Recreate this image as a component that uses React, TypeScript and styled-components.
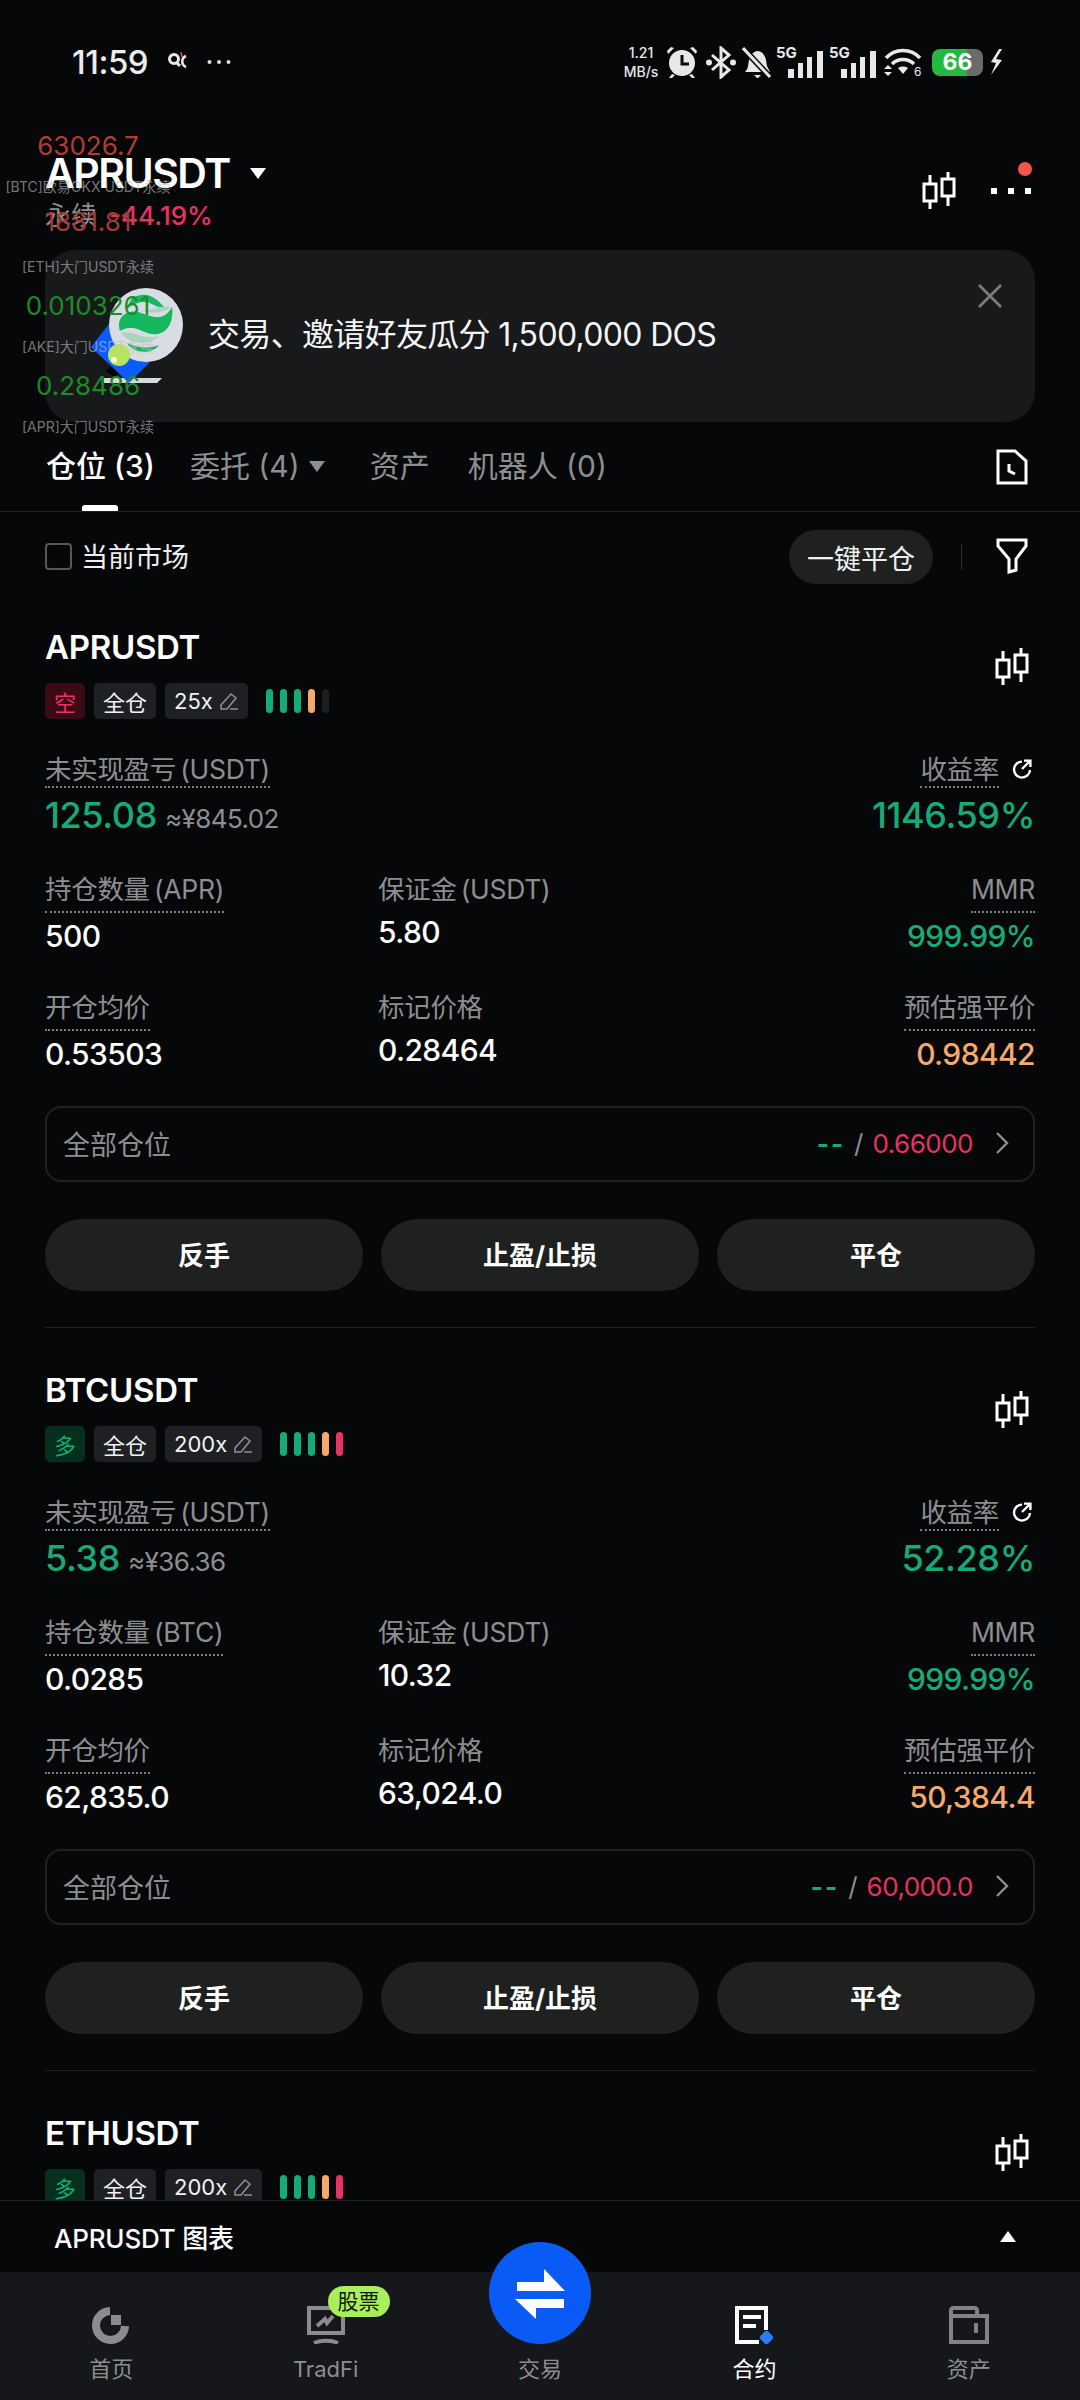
import styled, { createGlobalStyle } from "styled-components";

const GREEN = "#16ab76";
const RED = "#e8325f";
const ORANGE = "#f5a96b";
const GREY = "#8d8e90";
const LINE = "#1f2123";

const GlobalStyle = createGlobalStyle`
  html, body {
    margin: 0;
    padding: 0;
    width: 1080px;
    height: 2400px;
    overflow: hidden;
    background: #060708;
    color: #fff;
    font-family: Inter, "Noto Sans CJK SC", sans-serif;
  }
`;

const Page = styled.div`
  position: relative;
  width: 1080px;
  height: 2400px;
  display: flex;
  flex-direction: column;
  overflow: hidden;
  background: #060708;
`;

const Scroll = styled.div`
  flex: 1;
  min-height: 0;
  overflow: hidden;
`;

/* status bar */
const StatusBar = styled.div`
  height: 124px;
  display: flex;
  align-items: center;
  justify-content: space-between;
  padding: 0 77px 0 72px;
  box-sizing: border-box;
`;

const StatusLeft = styled.div`
  display: flex;
  align-items: center;
`;

const Time = styled.span`
  font-size: 33px;
  font-weight: 500;
  color: #ececec;
  letter-spacing: -0.5px;
`;

const StatusRight = styled.div`
  display: flex;
  align-items: center;
  color: #e8e8e8;
`;

const NetSpeed = styled.div`
  width: 40px;
  font-size: 14px;
  line-height: 19px;
  font-weight: 500;
  text-align: center;
  white-space: nowrap;
  margin-right: 6px;
`;

const Signal = styled.div`
  position: relative;
  width: 47px;
  height: 32px;
  margin-right: 6px;
`;

const SignalLabel = styled.span`
  position: absolute;
  left: 0;
  top: -2px;
  font-size: 15px;
  line-height: 18px;
  font-weight: 700;
`;

const SignalBars = styled.svg`
  position: absolute;
  right: 0;
  bottom: 0;
`;

const Battery = styled.div`
  position: relative;
  width: 51px;
  height: 27px;
  margin: 0 7px 0 10px;
  border-radius: 8px;
  overflow: hidden;
  background: linear-gradient(90deg, #25b83f 0 68%, #6a6a6a 68% 100%);
  font-size: 23px;
  line-height: 27px;
  font-weight: 700;
  text-align: center;
  color: #fff;
`;

/* market header */
const Header = styled.div`
  height: 126px;
  padding: 25px 48px 0 45px;
  box-sizing: border-box;
  display: flex;
  justify-content: space-between;
`;

const MarketTitle = styled.div`
  display: flex;
  align-items: center;
  font-size: 41px;
  line-height: 48px;
  font-weight: 600;
  letter-spacing: -1.5px;
`;

const Caret = styled.span<{ $color?: string; $w?: number; $h?: number }>`
  display: inline-block;
  margin-left: 20px;
  width: 0;
  height: 0;
  border-left: ${(p) => (p.$w ?? 16) / 2}px solid transparent;
  border-right: ${(p) => (p.$w ?? 16) / 2}px solid transparent;
  border-top: ${(p) => p.$h ?? 11}px solid ${(p) => p.$color ?? "#fff"};
`;

const MarketSub = styled.div`
  margin-top: 1px;
  line-height: 36px;
  display: flex;
  gap: 12px;
  font-size: 26px;
  color: ${GREY};
`;

const MarketChange = styled.span`
  color: ${RED};
  font-weight: 500;
`;

const HeaderActions = styled.div`
  display: flex;
  gap: 34px;
  margin-top: 23px;
  height: 38px;
  align-items: center;
`;

const MoreDots = styled.div`
  position: relative;
  display: flex;
  gap: 11px;
  width: 41px;

  i {
    display: block;
    width: 6px;
    height: 6px;
    background: #fff;
  }

  &::after {
    content: "";
    position: absolute;
    right: 0;
    top: -26px;
    width: 14px;
    height: 14px;
    border-radius: 50%;
    background: #f0564a;
  }
`;

/* promo banner */
const Banner = styled.div`
  position: relative;
  height: 172px;
  margin: 0 45px;
  border-radius: 30px;
  background: #18191b;
  display: flex;
  align-items: center;
  padding-left: 25px;
`;

const BannerText = styled.div`
  margin: 0 0 8px 7px;
  font-size: 32px;
  letter-spacing: -0.68px;
  color: #f4f4f4;
`;

const BannerClose = styled.svg`
  position: absolute;
  top: 34px;
  right: 33px;
`;

/* floating ticker widget, sits on top of the page */
const Ticker = styled.div`
  position: absolute;
  left: 0;
  top: 126px;
  width: 176px;
  display: flex;
  flex-direction: column;
  align-items: center;
  pointer-events: none;
`;

const TickerPrice = styled.div<{ $color: string; $top: number }>`
  margin-top: ${(p) => p.$top}px;
  line-height: 40px;
  font-size: 26px;
  color: ${(p) => p.$color};
  white-space: nowrap;
`;

const TickerName = styled.div<{ $top: number }>`
  margin-top: ${(p) => p.$top}px;
  line-height: 20px;
  font-size: 14px;
  color: rgba(190, 190, 190, 0.62);
  white-space: nowrap;
`;

/* tabs */
const Tabs = styled.div`
  height: 90px;
  box-sizing: border-box;
  border-bottom: 1px solid ${LINE};
  padding: 0 52px 0 46px;
  display: flex;
  align-items: flex-start;
`;

const Tab = styled.div<{ $active?: boolean; $gap: number }>`
  position: relative;
  height: 89px;
  box-sizing: border-box;
  padding-top: 24px;
  margin-right: ${(p) => p.$gap}px;
  display: flex;
  align-items: flex-start;
  font-size: 30px;
  line-height: 40px;
  font-weight: ${(p) => (p.$active ? 500 : 400)};
  color: ${(p) => (p.$active ? "#fff" : GREY)};

  &::after {
    content: "";
    display: ${(p) => (p.$active ? "block" : "none")};
    position: absolute;
    left: 50%;
    bottom: 0;
    transform: translateX(-50%);
    width: 36px;
    height: 6px;
    border-radius: 3px 3px 0 0;
    background: #fff;
  }
`;

const TabIcon = styled.svg`
  margin: 27px 0 0 auto;
`;

/* filter row */
const FilterRow = styled.div`
  height: 54px;
  margin: 18px 52px 1px 45px;
  display: flex;
  align-items: center;
`;

const Checkbox = styled.span`
  width: 27px;
  height: 27px;
  box-sizing: border-box;
  border: 2px solid #55575a;
  border-radius: 4px;
  margin: 0 9px 2px 0;
`;

const FilterText = styled.span`
  font-size: 27px;
  color: #eee;
  flex: 1;
  margin-bottom: 4px;
`;

const CloseAllButton = styled.div`
  width: 144px;
  height: 54px;
  border-radius: 27px;
  background: #1f2120;
  display: flex;
  align-items: center;
  justify-content: center;
  font-size: 27px;
  color: #f0f0f0;
`;

const Separator = styled.span`
  width: 1px;
  height: 26px;
  margin: 0 34px 0 28px;
  background: #2c2e30;
`;

/* position card */
const Card = styled.div`
  margin: 0 45px;
  padding: 42px 0 36px;
  border-bottom: 1px solid ${LINE};
`;

const CardHead = styled.div`
  display: flex;
  justify-content: space-between;
  align-items: center;
`;

const CardChart = styled.div`
  margin: 0 5px 8px 0;
`;

const Symbol = styled.div`
  font-size: 33px;
  line-height: 40px;
  font-weight: 600;
  letter-spacing: -0.3px;
`;

const Tags = styled.div`
  margin-top: 16px;
  display: flex;
  align-items: center;
  gap: 9px;
`;

const Tag = styled.span<{ $bg?: string; $color?: string }>`
  height: 36px;
  padding: 0 9px;
  border-radius: 5px;
  display: flex;
  align-items: center;
  gap: 6px;
  font-size: 22px;
  background: ${(p) => p.$bg ?? "#1e2024"};
  color: ${(p) => p.$color ?? "#f2f2f2"};
`;

const Risk = styled.div`
  margin-left: 9px;
  display: flex;
  gap: 7px;
`;

const RiskBar = styled.span<{ $color: string }>`
  width: 7px;
  height: 24px;
  border-radius: 4px;
  background: ${(p) => p.$color};
`;

const PnlRow = styled.div`
  margin-top: 34px;
  display: flex;
  justify-content: space-between;
`;

const PnlColumn = styled.div<{ $right?: boolean }>`
  display: flex;
  flex-direction: column;
  align-items: ${(p) => (p.$right ? "flex-end" : "flex-start")};
`;

const LabelRow = styled.div`
  display: flex;
  align-items: flex-start;
  gap: 13px;
`;

const RefreshIcon = styled.svg`
  margin: 6px 3px 0 0;
`;

const Label = styled.span<{ $compact?: boolean; $plain?: boolean }>`
  font-size: 26.5px;
  letter-spacing: -0.3px;
  word-spacing: -3px;
  line-height: ${(p) => (p.$compact ? 32 : 36)}px;
  color: ${GREY};
  white-space: nowrap;
  padding-bottom: ${(p) => (p.$compact ? 1 : p.$plain ? 0 : 4)}px;
  border-bottom: ${(p) => (p.$plain ? "none" : "2px dotted #7a7b7d")};
`;

const PnlValue = styled.div<{ $color: string }>`
  margin-top: 5px;
  font-size: 36px;
  line-height: 44px;
  font-weight: 500;
  letter-spacing: -0.4px;
  color: ${(p) => p.$color};
`;

const Approx = styled.span`
  margin-left: 8px;
  font-size: 26px;
  font-weight: 400;
  letter-spacing: -0.6px;
  color: ${GREY};
`;

const StatGrid = styled.div`
  margin-top: 30px;
  display: grid;
  grid-template-columns: 333px 1fr auto;
  row-gap: 33px;
`;

const Stat = styled.div<{ $right?: boolean }>`
  display: flex;
  flex-direction: column;
  align-items: ${(p) => (p.$right ? "flex-end" : "flex-start")};
`;

const StatValue = styled.div<{ $color?: string; $plain?: boolean }>`
  margin-top: ${(p) => (p.$plain ? 5 : 3)}px;
  font-size: 30px;
  line-height: 40px;
  font-weight: 500;
  letter-spacing: -0.6px;
  color: ${(p) => p.$color ?? "#fff"};
`;

const AllPositions = styled.div`
  margin-top: 32px;
  height: 76px;
  box-sizing: border-box;
  border: 2px solid #1f2123;
  border-radius: 16px;
  padding: 0 23px 2px 16px;
  display: flex;
  align-items: center;
  justify-content: space-between;
  font-size: 27px;
  color: ${GREY};
`;

const Trigger = styled.div`
  display: flex;
  align-items: center;
  gap: 9px;
  font-size: 26px;
`;

const TriggerEmpty = styled.span`
  color: ${GREEN};
  font-weight: 700;
  letter-spacing: 2px;
`;

const TriggerPrice = styled.span`
  color: ${RED};
  letter-spacing: -0.5px;
`;

const TriggerChevron = styled.svg`
  margin-left: 12px;
`;

const Actions = styled.div`
  margin-top: 37px;
  display: grid;
  grid-template-columns: repeat(3, 1fr);
  gap: 18px;
`;

const ActionButton = styled.div`
  height: 72px;
  box-sizing: border-box;
  padding-bottom: 3px;
  border-radius: 36px;
  background: #1f2120;
  display: flex;
  align-items: center;
  justify-content: center;
  font-size: 26px;
  font-weight: 700;
  color: #fff;
`;

/* bottom */
const ChartBar = styled.div`
  height: 72px;
  box-sizing: border-box;
  border-top: 1px solid #202224;
  padding: 0 64px 0 54px;
  display: flex;
  align-items: center;
  justify-content: space-between;
  font-size: 26px;
  font-weight: 500;
  letter-spacing: -0.2px;
  background: #060708;
`;

const CaretUp = styled.span`
  width: 0;
  height: 0;
  border-left: 8px solid transparent;
  border-right: 8px solid transparent;
  border-bottom: 11px solid #fff;
`;

const Nav = styled.div`
  height: 128px;
  box-sizing: border-box;
  padding: 34px 4px 0;
  background: #15171a;
  display: grid;
  grid-template-columns: repeat(5, 1fr);
`;

const NavItem = styled.div<{ $active?: boolean }>`
  position: relative;
  display: flex;
  flex-direction: column;
  align-items: center;
  font-size: 22px;
  color: ${(p) => (p.$active ? "#fff" : GREY)};
`;

const NavIcon = styled.div`
  position: relative;
  height: 38px;
`;

const NavLabel = styled.span`
  margin-top: 10px;
  line-height: 30px;
`;

const StockBadge = styled.span`
  position: absolute;
  left: 21px;
  top: -20px;
  width: 62px;
  height: 31px;
  border-radius: 16px;
  background: #a9ee5b;
  color: #0e1a06;
  font-size: 21px;
  line-height: 31px;
  text-align: center;
`;

const TradeButton = styled.svg`
  position: absolute;
  left: 489px;
  bottom: 56px;
`;

function CandleIcon() {
  return (
    <svg width="36" height="38" viewBox="0 0 36 38" fill="none" stroke="#fff" strokeWidth="3">
      <path d="M9 3v9M9 29v8M3 12h12v17H3zM27 0v7M27 24v10M21 7h12v17H21z" />
    </svg>
  );
}

function PencilIcon() {
  return (
    <svg width="20" height="20" viewBox="0 0 20 20" fill="none" stroke="#8d8e90" strokeWidth="1.6">
      <path d="M2 14 12 3l5 4L8 18H2zM11 18h8" />
    </svg>
  );
}

function StatusIcons() {
  return (
    <StatusRight>
      <NetSpeed>
        1.21
        <br />
        MB/s
      </NetSpeed>
      <svg width="30" height="33" viewBox="0 0 30 33" style={{ marginRight: 9 }}>
        <circle cx="15" cy="17" r="13" fill="#e8e8e8" />
        <path d="M15 9v9h7" fill="none" stroke="#0a0a0a" strokeWidth="3" />
        <path d="M1 8 7 2 4 1 0 5zM29 8l-6-6 3-1 4 4zM5 28l-3 4h3l3-3zM25 28l3 4h-3l-3-3z" fill="#e8e8e8" />
      </svg>
      <svg width="30" height="33" viewBox="0 0 30 33" fill="none" stroke="#e8e8e8" strokeWidth="3" style={{ marginRight: 6 }}>
        <path d="M6 9l17 15-8 7V2l8 7L6 24" />
        <circle cx="3" cy="16.5" r="1.5" fill="#e8e8e8" />
        <circle cx="27" cy="16.5" r="1.5" fill="#e8e8e8" />
      </svg>
      <svg width="30" height="33" viewBox="0 0 30 33" style={{ marginRight: 4 }}>
        <path d="M3 26c3-3 3-6 4-12 1-5 4-8 8-9 5 0 8 4 9 9l1 6 3 6z" fill="#e8e8e8" />
        <path d="M12 29h7l-3 3h-1z" fill="#e8e8e8" />
        <path d="M0 1l28 30" stroke="#0a0a0a" strokeWidth="6" />
        <path d="M1 2l27 29" stroke="#e8e8e8" strokeWidth="3" />
      </svg>
      {[0, 1].map((i) => (
        <Signal key={i}>
          <SignalLabel>5G</SignalLabel>
          <SignalBars width="35" height="27" viewBox="0 0 35 27" fill="#e8e8e8">
            <rect x="0" y="18" width="6" height="9" />
            <rect x="10" y="12" width="5" height="15" />
            <rect x="19" y="6" width="5" height="21" />
            <rect x="29" y="0" width="6" height="27" />
          </SignalBars>
        </Signal>
      ))}
      <svg width="38" height="30" viewBox="0 0 38 30" fill="none" stroke="#e8e8e8" strokeWidth="3.5" style={{ marginLeft: 2 }}>
        <path d="M2 11c9-10 25-10 34 0M8 17c6-6 16-6 22 0" />
        <path d="M14 21c3-2 7-2 10 0l-5 6z" fill="#e8e8e8" stroke="none" />
        <path d="M0 22l4-4 4 4zM0 25l4 4 4-4z" fill="#e8e8e8" stroke="none" />
        <text x="30" y="29" fontSize="12" fill="#e8e8e8" stroke="none" fontFamily="Inter">6</text>
      </svg>
      <Battery>66</Battery>
      <svg width="13" height="26" viewBox="0 0 13 26" fill="#e8e8e8">
        <path d="M9 0 1 13l5 1-5 12 11-15-6-1 6-10z" />
      </svg>
    </StatusRight>
  );
}

function BannerLogo() {
  return (
    <svg width="130" height="130" viewBox="0 0 130 130" style={{ marginLeft: 1 }}>
      <path d="M35 100 52 84l8 8-17 14z" fill="#000" />
      <path d="M33 107h58l-5 5H33z" fill="#d6dadf" />
      <path d="M38 53 20 76l38 36 22-22z" fill="#0a5cff" />
      <circle cx="75" cy="54" r="37" fill="#d9dde3" />
      <path d="M56 38c4-8 2-12 14-14 10-2 18 6 23 12-10 1-12-6-22-5-6 1-10 3-15 7z" fill="#14b85e" />
      <path d="M48 52c2-10 12-14 22-10 10 3 22 10 31-6 2 14-4 25-14 27-12 2-18-7-28-6-5 0-8 2-10 3-1-2-1-5-1-8z" fill="#14b85e" />
      <path d="M50 62c10-4 24 8 38 3-8 9-28 10-38-3zM72 40c10-2 20-6 28-4-6 6-18 7-28 4z" fill="#a9d6bb" />
      <path d="M56 72c10 5 24 6 32 2-6 9-24 10-32-2z" fill="#16b45f" />
      <circle cx="48" cy="84" r="11" fill="#b5e65a" />
      <circle cx="43" cy="89" r="3" fill="#f2f8e0" />
    </svg>
  );
}

type Stats = {
  unit: string;
  pnl: string;
  approx: string;
  roi: string;
  size: string;
  margin: string;
  entry: string;
  mark: string;
  liq: string;
  stop: string;
};

type Position = {
  symbol: string;
  side: string;
  sideBg: string;
  sideColor: string;
  leverage: string;
  risk: string[];
  stats?: Stats;
};

const positions: Position[] = [
  {
    symbol: "APRUSDT",
    side: "空",
    sideBg: "#3a0a15",
    sideColor: RED,
    leverage: "25x",
    risk: [GREEN, GREEN, GREEN, ORANGE, "#1c1e20"],
    stats: {
      unit: "APR",
      pnl: "125.08",
      approx: "≈¥845.02",
      roi: "1146.59%",
      size: "500",
      margin: "5.80",
      entry: "0.53503",
      mark: "0.28464",
      liq: "0.98442",
      stop: "0.66000",
    },
  },
  {
    symbol: "BTCUSDT",
    side: "多",
    sideBg: "#05301f",
    sideColor: GREEN,
    leverage: "200x",
    risk: [GREEN, GREEN, GREEN, ORANGE, RED],
    stats: {
      unit: "BTC",
      pnl: "5.38",
      approx: "≈¥36.36",
      roi: "52.28%",
      size: "0.0285",
      margin: "10.32",
      entry: "62,835.0",
      mark: "63,024.0",
      liq: "50,384.4",
      stop: "60,000.0",
    },
  },
  {
    symbol: "ETHUSDT",
    side: "多",
    sideBg: "#05301f",
    sideColor: GREEN,
    leverage: "200x",
    risk: [GREEN, GREEN, GREEN, ORANGE, RED],
  },
];

function PositionCard({ position }: { position: Position }) {
  const { stats } = position;
  return (
    <Card>
      <CardHead>
        <div>
          <Symbol>{position.symbol}</Symbol>
          <Tags>
            <Tag $bg={position.sideBg} $color={position.sideColor}>
              {position.side}
            </Tag>
            <Tag>全仓</Tag>
            <Tag>
              {position.leverage}
              <PencilIcon />
            </Tag>
            <Risk>
              {position.risk.map((color, i) => (
                <RiskBar key={i} $color={color} />
              ))}
            </Risk>
          </Tags>
        </div>
        <CardChart>
          <CandleIcon />
        </CardChart>
      </CardHead>
      {stats && (
        <>
          <PnlRow>
            <PnlColumn>
              <Label $compact>未实现盈亏 (USDT)</Label>
              <PnlValue $color={GREEN}>
                {stats.pnl}
                <Approx>{stats.approx}</Approx>
              </PnlValue>
            </PnlColumn>
            <PnlColumn $right>
              <LabelRow>
                <Label $compact>收益率</Label>
                <RefreshIcon width="20" height="20" viewBox="0 0 20 20" fill="none" stroke="#fff" strokeWidth="2.4">
                  <path d="M10 2.6A8 8 0 1 0 18 11" />
                  <path d="M10 10l7.5-7.5M12 1.6h6.4V8" />
                </RefreshIcon>
              </LabelRow>
              <PnlValue $color={GREEN}>{stats.roi}</PnlValue>
            </PnlColumn>
          </PnlRow>
          <StatGrid>
            <Stat>
              <Label>持仓数量 ({stats.unit})</Label>
              <StatValue>{stats.size}</StatValue>
            </Stat>
            <Stat>
              <Label $plain>保证金 (USDT)</Label>
              <StatValue $plain>{stats.margin}</StatValue>
            </Stat>
            <Stat $right>
              <Label>MMR</Label>
              <StatValue $color={GREEN}>999.99%</StatValue>
            </Stat>
            <Stat>
              <Label>开仓均价</Label>
              <StatValue>{stats.entry}</StatValue>
            </Stat>
            <Stat>
              <Label $plain>标记价格</Label>
              <StatValue $plain>{stats.mark}</StatValue>
            </Stat>
            <Stat $right>
              <Label>预估强平价</Label>
              <StatValue $color={ORANGE}>{stats.liq}</StatValue>
            </Stat>
          </StatGrid>
          <AllPositions>
            全部仓位
            <Trigger>
              <TriggerEmpty>--</TriggerEmpty>
              <span>/</span>
              <TriggerPrice>{stats.stop}</TriggerPrice>
              <TriggerChevron width="16" height="22" viewBox="0 0 16 22" fill="none" stroke="#8d8e90" strokeWidth="2.4">
                <path d="M3 1l10 10L3 21" />
              </TriggerChevron>
            </Trigger>
          </AllPositions>
          <Actions>
            <ActionButton>反手</ActionButton>
            <ActionButton>止盈/止损</ActionButton>
            <ActionButton>平仓</ActionButton>
          </Actions>
        </>
      )}
    </Card>
  );
}

export default function App() {
  return (
    <Page>
      <GlobalStyle />
      <Scroll>
        <StatusBar>
          <StatusLeft>
            <Time>11:59</Time>
            <svg width="20" height="22" viewBox="0 0 20 22" fill="none" style={{ marginLeft: 20 }}>
              <circle cx="6" cy="8" r="4.5" stroke="#e8e8e8" strokeWidth="3" />
              <path d="M9 12l3 3" stroke="#e8e8e8" strokeWidth="3" />
              <path d="M18 5c-5 2-5 9 0 11" stroke="#e8e8e8" strokeWidth="2.6" />
              <path d="M13 1l1 5" stroke="#e04a3a" strokeWidth="1.6" />
            </svg>
            <svg width="24" height="6" viewBox="0 0 24 6" fill="#ddd" style={{ marginLeft: 19 }}>
              <circle cx="2.5" cy="3" r="2" />
              <circle cx="12" cy="3" r="2" />
              <circle cx="21.5" cy="3" r="2" />
            </svg>
          </StatusLeft>
          <StatusIcons />
        </StatusBar>

        <Header>
          <div>
            <MarketTitle>
              APRUSDT
              <Caret />
            </MarketTitle>
            <MarketSub>
              永续
              <MarketChange>-44.19%</MarketChange>
            </MarketSub>
          </div>
          <HeaderActions>
            <CandleIcon />
            <MoreDots>
              <i />
              <i />
              <i />
            </MoreDots>
          </HeaderActions>
        </Header>

        <Banner>
          <BannerLogo />
          <BannerText>交易、邀请好友瓜分 1,500,000 DOS</BannerText>
          <BannerClose width="24" height="24" viewBox="0 0 24 24" stroke="#7d7e80" strokeWidth="2.6">
            <path d="M1 1l22 22M23 1 1 23" />
          </BannerClose>
        </Banner>

        <Tabs>
          <Tab $active $gap={35}>仓位 (3)</Tab>
          <Tab $gap={45}>
            委托 (4)
            <Caret $color={GREY} $w={17} $h={11} style={{ margin: "15px 0 0 9px" }} />
          </Tab>
          <Tab $gap={38}>资产</Tab>
          <Tab $gap={0}>机器人 (0)</Tab>
          <TabIcon width="32" height="36" viewBox="0 0 32 36" fill="none" stroke="#fff" strokeWidth="3">
            <path d="M2 2h17l11 10v22H2z" />
            <path d="M13 15v7l6 3" />
          </TabIcon>
        </Tabs>

        <FilterRow>
          <Checkbox />
          <FilterText>当前市场</FilterText>
          <CloseAllButton>一键平仓</CloseAllButton>
          <Separator />
          <svg width="32" height="36" viewBox="0 0 32 36" fill="none" stroke="#fff" strokeWidth="3" style={{ marginBottom: 2 }}>
            <path d="M2 2h28v6L20 21v11l-7 2V21L2 8z" />
          </svg>
        </FilterRow>

        {positions.map((p) => (
          <PositionCard key={p.symbol} position={p} />
        ))}
      </Scroll>

      <ChartBar>
        APRUSDT 图表
        <CaretUp />
      </ChartBar>
      <Nav>
        <NavItem>
          <NavIcon>
            <svg width="38" height="38" viewBox="0 0 38 38" fill="none" stroke="#8b8c8e" strokeWidth="8">
              <path d="M18 5a14.5 14.5 0 1 0 15 15" />
              <path d="M19 9h10v10H19z" fill="#8b8c8e" stroke="none" />
            </svg>
          </NavIcon>
          <NavLabel>首页</NavLabel>
        </NavItem>
        <NavItem>
          <NavIcon>
            <svg width="38" height="38" viewBox="0 0 38 38" fill="none" stroke="#8b8c8e" strokeWidth="4">
              <path d="M2 2h34v25H2z" />
              <path d="M10 20l8-7 2 4 6-7" strokeWidth="4" />
              <path d="M7 37c7-3 17-3 24 0" />
            </svg>
            <StockBadge>股票</StockBadge>
          </NavIcon>
          <NavLabel>TradFi</NavLabel>
        </NavItem>
        <NavItem>
          <NavIcon />
          <NavLabel>交易</NavLabel>
        </NavItem>
        <NavItem $active>
          <NavIcon>
            <svg width="38" height="38" viewBox="0 0 38 38" fill="none">
              <path d="M31 24V2H2v34h22" stroke="#fff" strokeWidth="4" />
              <path d="M8 9h18v4H8zM8 18h13v4H8z" fill="#fff" />
              <rect x="26" y="26" width="11" height="11" rx="3" transform="rotate(45 31.5 31.5)" fill="#2a7bf5" />
            </svg>
          </NavIcon>
          <NavLabel>合约</NavLabel>
        </NavItem>
        <NavItem>
          <NavIcon>
            <svg width="40" height="38" viewBox="0 0 40 38" fill="none" stroke="#808284" strokeWidth="4">
              <path d="M2 10V4c0-1 1-2 2-2h22c1 0 2 1 2 2v6h10v26H2zM2 10h26" />
              <path d="M27 17v10" />
            </svg>
          </NavIcon>
          <NavLabel>资产</NavLabel>
        </NavItem>
      </Nav>

      <TradeButton width="102" height="102" viewBox="0 0 102 102">
        <circle cx="51" cy="51" r="51" fill="#0a5bf5" />
        <path d="M55 27l21 22H28v-9h27zM75 57v9H47v11L26 57z" fill="#fff" />
      </TradeButton>

      <Ticker>
        <TickerPrice $color="#b33c2e" $top={0}>63026.7</TickerPrice>
        <TickerName $top={11}>[BTC]欧易OKX USDT永续</TickerName>
        <TickerPrice $color="#a33c33" $top={5}>1881.81</TickerPrice>
        <TickerName $top={15}>[ETH]大门USDT永续</TickerName>
        <TickerPrice $color="#1f8a2a" $top={9}>0.0103261</TickerPrice>
        <TickerName $top={11}>[AKE]大门USDT永续</TickerName>
        <TickerPrice $color="#1f8a2a" $top={9}>0.28486</TickerPrice>
        <TickerName $top={11}>[APR]大门USDT永续</TickerName>
      </Ticker>
    </Page>
  );
}
